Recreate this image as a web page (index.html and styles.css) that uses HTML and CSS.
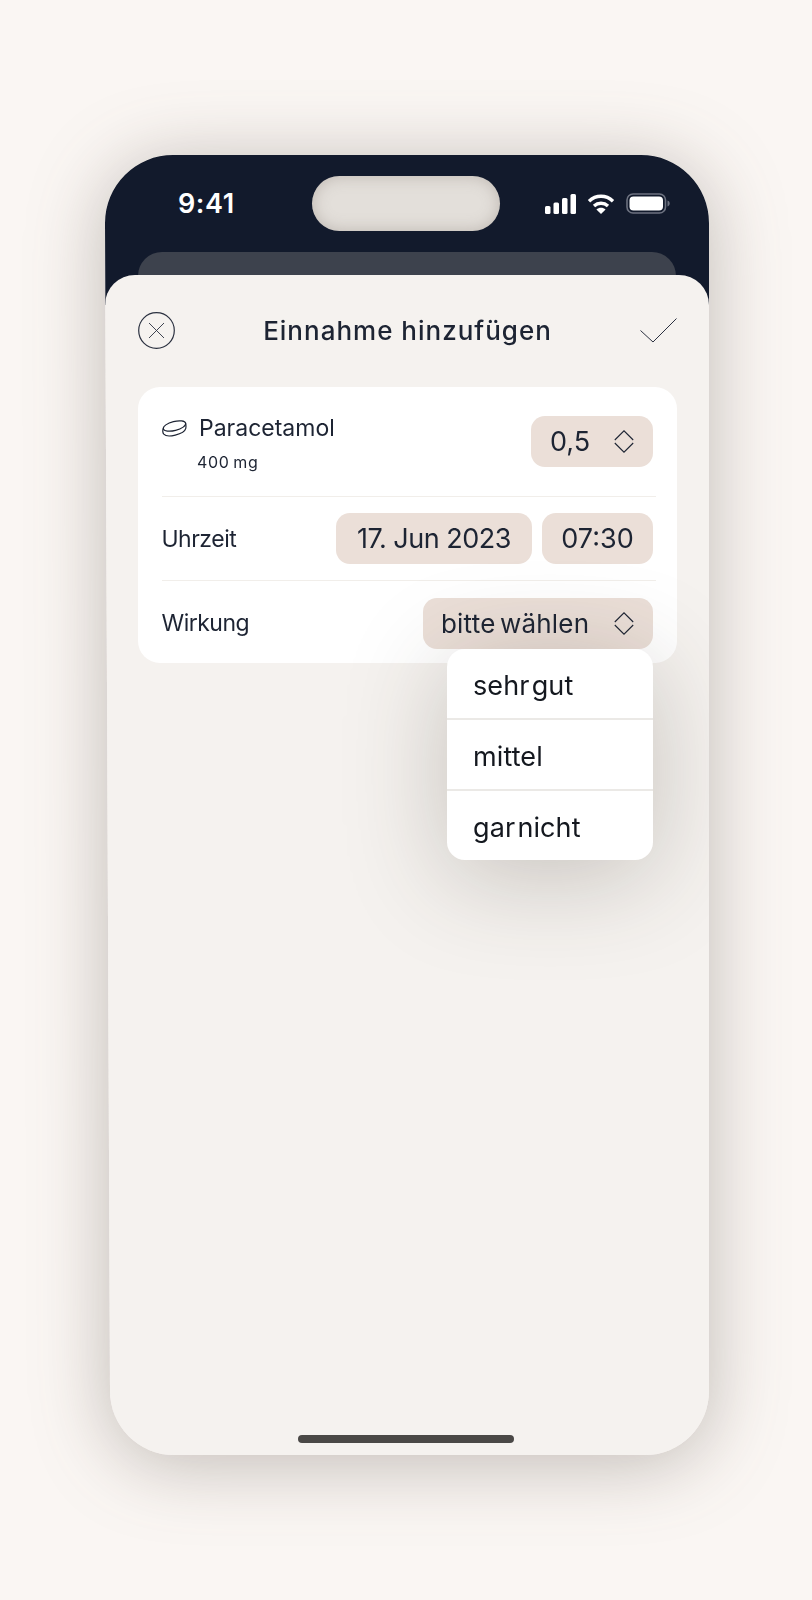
FILE: index.html
```html
<!DOCTYPE html>
<html lang="de">
<head>
    <meta charset="UTF-8">
    <title>Einnahme hinzufügen</title>
    <link rel="stylesheet" href="styles.css">
</head>
<body>
    <div class="phone-wrap">
        <div class="phone">
            <div class="top">
                <div class="status">
                    <span class="clock">9:41</span>
                    <div class="island"></div>
                    <div class="status-icons">
                        <svg width="31" height="20" viewBox="0 0 31 20" fill="#fff">
                            <rect x="0" y="12" width="5.5" height="8" rx="1.5"/>
                            <rect x="8.5" y="8.5" width="5.5" height="11.5" rx="1.5"/>
                            <rect x="17" y="4" width="5.5" height="16" rx="1.5"/>
                            <rect x="25.5" y="0" width="5.5" height="20" rx="1.5"/>
                        </svg>
                        <svg width="28" height="20" viewBox="0 0 28 20" fill="none" stroke="#fff" stroke-width="3.4">
                            <path d="M2 7.2C9 .6 19 .6 26 7.2"/>
                            <path d="M7 12C11 8.4 17 8.4 21 12"/>
                            <path d="M14 20l-4.6-4.6c2.6-2.2 6.6-2.2 9.2 0z" fill="#fff" stroke="none"/>
                        </svg>
                        <svg width="44" height="21" viewBox="0 0 44 21">
                            <rect x="1" y="1" width="38.5" height="19" rx="6" fill="none" stroke="#6d7280" stroke-width="1.6"/>
                            <rect x="3.5" y="3.5" width="33.5" height="14" rx="4" fill="#fff"/>
                            <path d="M41.5 7.5c1.4.4 2.2 1.6 2.2 3s-.8 2.6-2.2 3z" fill="#6d7280"/>
                        </svg>
                    </div>
                </div>
                <div class="peek"></div>
            </div>

            <div class="sheet">
                <div class="sheet-head">
                    <svg class="close-icon" width="37" height="37" viewBox="0 0 37 37" fill="none" stroke="#2b3140">
                        <circle cx="18.5" cy="18.500" r="17.800" stroke-width="1.200"/>
                        <path d="M11 11l15 15M26 11L11 26" stroke-width="0.900"/>
                    </svg>
                    <h1>Einnahme hinzufügen</h1>
                    <svg class="check-icon" width="37" height="25" viewBox="0 0 37 25" fill="none" stroke="#2b3140" stroke-width="1">
                        <path d="M.5 12.500L13 24 36.500 .5"/>
                    </svg>
                </div>

                <div class="card">
                    <div class="row row-first">
                        <div class="med">
                            <div class="med-name">
                                <svg width="25" height="19" viewBox="0 0 25 19" fill="none" stroke="#1d2433" stroke-width="1.200" stroke-linejoin="round">
                                    <ellipse cx="12.500" cy="7" rx="11.500" ry="4.500" transform="rotate(-14 12.500 7)"/>
                                    <path d="M1.200 9.500C.6 11.500.8 14 1.800 15.200c1.700 1.900 6.500 2.100 11.500.9 5-1.200 9.700-3.800 10.400-6.400.4-1.600.3-3.500 0-5.200"/>
                                </svg>
                                <span>Paracetamol</span>
                            </div>
                            <div class="med-dose">400 mg</div>
                        </div>
                        <div class="chip chip-amount">
                            <span>0,5</span>
                            <svg class="updown" width="20" height="23" viewBox="0 0 20 23" fill="none" stroke="#1d2433" stroke-width="1.100">
                                <path d="M.8 10L10 .8 19.200 10"/>
                                <path d="M.8 13L10 22.200 19.200 13"/>
                            </svg>
                        </div>
                    </div>
                    <div class="row">
                        <span class="label">Uhrzeit</span>
                        <div class="chips">
                            <div class="chip chip-date">17. Jun 2023</div>
                            <div class="chip chip-time">07:30</div>
                        </div>
                    </div>
                    <div class="row row-last">
                        <span class="label">Wirkung</span>
                        <div class="chip chip-select">
                            <span>bitte wählen</span>
                            <svg class="updown" width="20" height="23" viewBox="0 0 20 23" fill="none" stroke="#1d2433" stroke-width="1.100">
                                <path d="M.8 10L10 .8 19.200 10"/>
                                <path d="M.8 13L10 22.200 19.200 13"/>
                            </svg>
                        </div>
                    </div>
                    <ul class="menu">
                        <li>sehr gut</li>
                        <li>mittel</li>
                        <li>gar nicht</li>
                    </ul>
                </div>

                <div class="home-bar"></div>
            </div>
        </div>
    </div>
</body>
</html>
```

FILE: styles.css
```css
* {
    box-sizing: border-box;
}
body {
    margin: 0;
    height: 1600px;
    overflow: hidden;
    background: #faf6f3;
    font-family: Inter, "Liberation Sans", sans-serif;
    color: #1d2433;
}
.phone-wrap {
    width: 604px;
    height: 1300px;
    margin: 155px 0 0 105px;
    filter: drop-shadow(0 8px 38px rgba(70, 60, 50, 0.32));
}
.phone {
    display: flex;
    flex-direction: column;
    height: 100%;
    background: #f5f2ef;
    clip-path: path("M68 0H536A68 68 0 0 1 604 68V1236A64 64 0 0 1 540 1300H69A64 64 0 0 1 5 1236L0 68A68 68 0 0 1 68 0Z");
}
.top {
    height: 150px;
    flex-shrink: 0;
    background: #121a2c;
}
.status {
    display: flex;
    align-items: center;
    height: 97px;
    padding: 0 0 0 73px;
}
.clock {
    width: 134px;
    color: #fff;
    font-size: 27px;
    font-weight: 600;
    letter-spacing: 0.6px;
}
.island {
    width: 188px;
    height: 55px;
    border-radius: 28px;
    background: #e3dfda;
    box-shadow: inset 0 0 16px rgba(120, 110, 100, 0.35);
}
.status-icons {
    display: flex;
    align-items: center;
    gap: 11px;
    margin-left: 45px;
}
.peek {
    height: 60px;
    margin: 0 33px;
    border-radius: 24px 24px 0 0;
    background: #3d424d;
}
.sheet {
    flex: 1;
    display: flex;
    flex-direction: column;
    margin-top: -30px;
    padding: 0 32px 12px 33px;
    border-radius: 30px 30px 0 0;
    background: #f5f2ef;
}
.sheet-head {
    display: flex;
    align-items: center;
    justify-content: space-between;
    height: 112px;
    padding-bottom: 1px;
}
.sheet-head h1 {
    margin: 0;
    font-size: 26px;
    font-weight: 500;
    letter-spacing: 1px;
    color: #1d2433;
}
.card {
    position: relative;
    width: 539px;
    height: 276px;
    padding: 0 24px;
    border-radius: 22px;
    background: #fff;
}
.row {
    display: flex;
    align-items: center;
    justify-content: space-between;
    height: 84px;
    border-bottom: 1px solid #f1eeea;
    margin-right: -3px;
    padding-right: 3px;
}
.row-first {
    align-items: flex-start;
    height: 110px;
    padding-top: 29px;
}
.row-last {
    border-bottom: none;
}
.med-name {
    display: flex;
    align-items: center;
    gap: 12px;
    margin-top: -2px;
    font-size: 23px;
    line-height: 28px;
}
.med-dose {
    margin: 10px 0 0 35px;
    font-size: 16px;
    line-height: 20px;
    letter-spacing: 0.7px;
    word-spacing: -1.500px;
}
.label {
    margin-left: -0.5px;
    font-size: 23px;
    letter-spacing: -0.5px;
}
.chips {
    display: flex;
    gap: 10px;
}
.chip {
    display: flex;
    align-items: center;
    justify-content: center;
    height: 51px;
    border-radius: 14px;
    background: #ebdfd8;
    font-size: 27px;
}
.chip-amount {
    width: 122px;
    padding: 0 19px;
    justify-content: space-between;
}
.chip-date {
    width: 196px;
    letter-spacing: -0.5px;
}
.chip-time {
    width: 111px;
}
.chip-select {
    width: 230px;
    padding: 0 19px 0 18px;
    justify-content: space-between;
    font-size: 26px;
    letter-spacing: 0.2px;
    word-spacing: -3px;
}
.menu {
    position: absolute;
    top: 262px;
    right: 24px;
    width: 206px;
    margin: 0;
    padding: 0;
    list-style: none;
    border-radius: 18px;
    background: #fff;
    box-shadow: 0 16px 100px rgba(60, 50, 40, 0.25);
    font-size: 27px;
    letter-spacing: 0.1px;
    word-spacing: -5.500px;
    color: #14181f;
}
.menu li {
    display: flex;
    align-items: center;
    height: 71px;
    padding: 4px 0 0 26px;
    border-bottom: 2px solid #ebe9e6;
}
.menu li:last-child {
    height: 69px;
    border-bottom: none;
}
.home-bar {
    width: 216px;
    height: 8px;
    margin: auto 0 0 160px;
    border-radius: 4px;
    background: #4a4846;
}
```
